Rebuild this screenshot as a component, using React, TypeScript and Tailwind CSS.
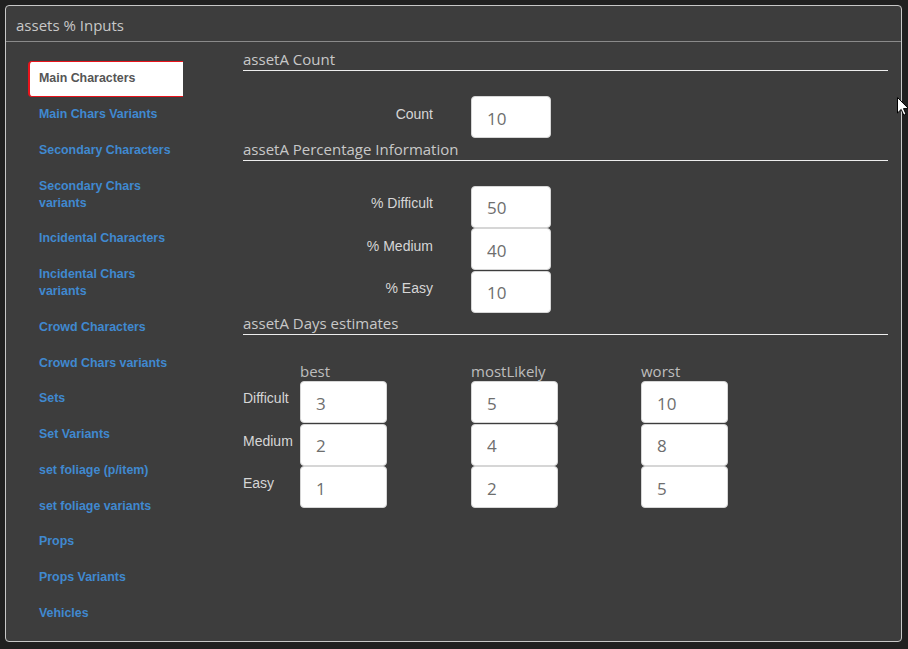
import React from "react";

const navItems = [
  "Main Characters",
  "Main Chars Variants",
  "Secondary Characters",
  "Secondary Chars variants",
  "Incidental Characters",
  "Incidental Chars variants",
  "Crowd Characters",
  "Crowd Chars variants",
  "Sets",
  "Set Variants",
  "set foliage (p/item)",
  "set foliage variants",
  "Props",
  "Props Variants",
  "Vehicles",
];

const sans = "font-['Liberation_Sans',Arial,sans-serif]";
const open = "font-['Open_Sans','Liberation_Sans',sans-serif]";

function Heading({ children }: { children: React.ReactNode }) {
  return (
    <h3
      className={`${open} border-b border-[#eeeeee] pb-px text-[15px] leading-[20px] text-[#c8c8c8]`}
    >
      {children}
    </h3>
  );
}

function NumBox({ value, wide }: { value: string; wide?: boolean }) {
  return (
    <input
      readOnly
      value={value}
      className={`${open} ${
        wide ? "w-[87px]" : "w-[80px]"
      } h-[42px] rounded-[4px] border border-[#d6d6d6] bg-white pl-[15px] pt-[2px] text-[17px] text-[#6e6e6e] outline-none`}
    />
  );
}

function LabelRow({ label, value }: { label: string; value: string }) {
  return (
    <div className="flex h-[42.5px] items-center">
      <span
        className={`${sans} mb-[6px] w-[190px] text-right text-[14px] text-[#d6d6d6]`}
      >
        {label}
      </span>
      <div className="ml-[38px]">
        <NumBox value={value} />
      </div>
    </div>
  );
}

const days = [
  { label: "Difficult", vals: ["3", "5", "10"] },
  { label: "Medium", vals: ["2", "4", "8"] },
  { label: "Easy", vals: ["1", "2", "5"] },
];

export default function App() {
  return (
    <div className="relative h-[649px] w-[908px] overflow-hidden bg-[#202020] pl-[5px] pt-[5px]">
      <div className="h-[637px] w-[897px] rounded-[4px] border border-[#c8c8c8] bg-[#3d3d3d]">
        {/* header */}
        <div className="h-[36px] border-b border-[#8a8a8a] pl-[10px] pt-[7px]">
          <span className={`${open} text-[15px] leading-[20px] text-[#c8c8c8]`}>
            assets % Inputs
          </span>
        </div>

        <div className="flex items-start pl-[22px] pr-[13px]">
          {/* sidebar */}
          <ul className="mt-[19px] w-[155px] shrink-0">
            {navItems.map((item, i) => (
              <li key={item}>
                <a
                  className={`${sans} block rounded-l-[4px] border border-l-2 border-r-0 py-[8.375px] pl-[9px] pr-[11px] text-[12.4px] font-bold leading-[17px] ${
                    i === 0
                      ? "border-[#e8141c] bg-white text-[#555555]"
                      : "border-transparent text-[#4089d0]"
                  }`}
                >
                  {item}
                </a>
              </li>
            ))}
          </ul>

          {/* content */}
          <div className="ml-[60px] mt-[7px] flex-1">
            <Heading>assetA Count</Heading>
            <div className="mt-[25px]">
              <LabelRow label="Count" value="10" />
            </div>

            <Heading>assetA Percentage Information</Heading>
            <div className="mt-[25px]">
              <LabelRow label="% Difficult" value="50" />
              <LabelRow label="% Medium" value="40" />
              <LabelRow label="% Easy" value="10" />
            </div>

            <Heading>assetA Days estimates</Heading>
            <div className="mt-[26px] grid grid-cols-[57px_171px_170px_87px]">
              <div />
              <div className={`${open} h-[20px] text-[15px] leading-[20px] text-[#bdbdbd]`}>best</div>
              <div className={`${open} h-[20px] text-[15px] leading-[20px] text-[#bdbdbd]`}>mostLikely</div>
              <div className={`${open} h-[20px] text-[15px] leading-[20px] text-[#bdbdbd]`}>worst</div>
              {days.map((row) => (
                <React.Fragment key={row.label}>
                  <div className="flex h-[42.5px] items-center">
                    <span className={`${sans} mb-[7px] text-[14px] text-[#d6d6d6]`}>
                      {row.label}
                    </span>
                  </div>
                  {row.vals.map((v, j) => (
                    <div key={j} className="h-[42.5px]">
                      <NumBox value={v} wide />
                    </div>
                  ))}
                </React.Fragment>
              ))}
            </div>
          </div>
        </div>
      </div>

      {/* mouse pointer */}
      <svg
        className="absolute left-[897px] top-[97px]"
        width="12"
        height="19"
        viewBox="0 0 12 19"
      >
        <path
          d="M0.5 0.5 L0.5 16 L4.2 12.4 L6.8 18.2 L9 17.2 L6.5 11.6 L11.5 11.6 Z"
          fill="#ffffff"
          stroke="#000000"
          strokeWidth="1"
        />
      </svg>
    </div>
  );
}
